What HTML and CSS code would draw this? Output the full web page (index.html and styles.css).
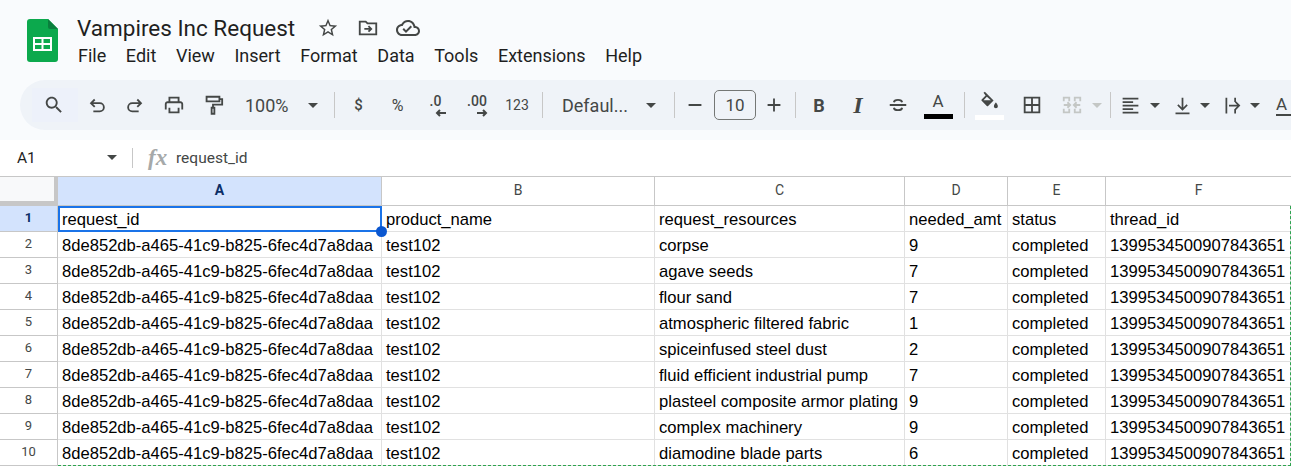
FILE: index.html
```html
<!DOCTYPE html>
<html lang="en">
<head>
  <meta charset="UTF-8">
  <meta name="viewport" content="width=device-width, initial-scale=1.0">
  <title>Vampires Inc Request</title>
  <link rel="stylesheet" href="styles.css">
</head>
<body>
  <div class="top">
    <header class="docbar">
      <svg class="logo" viewBox="0 0 31 43">
        <path d="M3 0H21L31 10V40a3 3 0 0 1-3 3H3a3 3 0 0 1-3-3V3a3 3 0 0 1 3-3z" fill="#0ca94d"/>
        <path d="M21 0L31 10H23a2 2 0 0 1-2-2z" fill="#0a7f3d"/>
        <path d="M6 18H25V32H6zM8 20V24H14.500V20zM16.500 20V24H23V20zM8 26V30H14.500V26zM16.500 26V30H23V26z" fill="#fff" fill-rule="evenodd"/>
      </svg>
      <div class="docinfo">
        <div class="titlerow">
          <span class="doctitle">Vampires Inc Request</span>
          <svg class="ticon star" viewBox="0 0 24 24"><path d="M22 9.240l-7.190-.62L12 2 9.190 8.630 2 9.240l5.460 4.730L5.820 21 12 17.270 18.180 21l-1.630-7.030L22 9.240zM12 15.400l-3.760 2.270 1-4.280-3.320-2.880 4.380-.38L12 6.100l1.710 4.040 4.380.38-3.320 2.880 1 4.280L12 15.400z"/></svg>
          <svg class="ticon move" viewBox="0 0 24 24"><path class="line" d="M3 19V5H9.500L11.500 7H21V19zM8 13H15M12.500 10L15.500 13L12.500 16"/></svg>
          <svg class="ticon cloud" viewBox="0 0 24 24"><path d="M19.350 10.040C18.670 6.590 15.640 4 12 4 9.110 4 6.600 5.640 5.350 8.040 2.340 8.360 0 10.910 0 14c0 3.310 2.690 6 6 6h13c2.760 0 5-2.240 5-5 0-2.640-2.050-4.780-4.650-4.960zM19 18H6c-2.210 0-4-1.790-4-4 0-2.050 1.530-3.760 3.560-3.970l1.070-.11.5-.95C8.080 7.140 9.940 6 12 6c2.620 0 4.880 1.860 5.390 4.430l.3 1.500 1.530.11c1.560.1 2.780 1.410 2.780 2.960 0 1.650-1.350 3-3 3zm-9-3.820l-2.090-2.090L6.500 13.500 10 17l6.010-6.010-1.410-1.410z"/></svg>
        </div>
        <nav class="menu">
          <span>File</span><span>Edit</span><span>View</span><span>Insert</span><span>Format</span><span>Data</span><span>Tools</span><span>Extensions</span><span>Help</span>
        </nav>
      </div>
    </header>

    <div class="toolbar">
      <div class="tool tool-search"><svg viewBox="0 0 24 24"><path d="M15.500 14h-.79l-.28-.27C15.410 12.590 16 11.110 16 9.500 16 5.910 13.090 3 9.500 3S3 5.910 3 9.500 5.910 16 9.500 16c1.610 0 3.090-.59 4.230-1.570l.27.28v.79l5 4.990L20.490 19l-4.990-5zm-6 0C7.010 14 5 11.990 5 9.500S7.010 5 9.500 5 14 7.010 14 9.500 11.990 14 9.500 14z"/></svg></div>
      <div class="tool w38"><svg viewBox="0 0 24 24"><path class="line" d="M9.500 6L5.500 10L9.500 14M5.500 10H15a4.500 4.500 0 0 1 0 9H8"/></svg></div>
      <div class="tool w38"><svg viewBox="0 0 24 24"><path class="line" d="M14.500 6L18.500 10L14.500 14M18.500 10H9a4.500 4.500 0 0 0 0 9H16"/></svg></div>
      <div class="tool w40"><svg viewBox="0 0 24 24"><path d="M19 8h-1V3H6v5H5c-1.660 0-3 1.340-3 3v6h4v4h12v-4h4v-6c0-1.660-1.340-3-3-3zM8 5h8v3H8V5zm8 14H8v-4h8v4zm2-2v-2H6v2H4v-6c0-.55.45-1 1-1h14c.55 0 1 .45 1 1v6h-2z"/></svg></div>
      <div class="tool w38"><svg viewBox="0 0 24 24"><path class="line" d="M5 3H19V8H5zM19 5.500H22V11.500H12V15M10.500 15H13.500V21.500H10.500z"/></svg></div>
      <div class="tool-zoom"><span>100%</span><i class="caret"></i></div>
      <i class="sep"></i>
      <div class="tool tool-text w47">$</div>
      <div class="tool tool-text tool-pct w31">%</div>
      <div class="tool w45 dec"><span>.0</span><svg viewBox="0 0 12 8"><path class="line" d="M11 4H2M5 1L2 4L5 7"/></svg></div>
      <div class="tool w38 dec"><span>.00</span><svg viewBox="0 0 12 8"><path class="line" d="M1 4H10M7 1L10 4L7 7"/></svg></div>
      <div class="tool tool-num w42">123</div>
      <i class="sep sep-num"></i>
      <div class="tool-font"><span>Defaul...</span><i class="caret"></i></div>
      <i class="sep"></i>
      <div class="tool w39"><svg viewBox="0 0 24 24"><path d="M5 11H19V13H5z"/></svg></div>
      <div class="sizebox">10</div>
      <div class="tool w35"><svg viewBox="0 0 24 24"><path d="M11 5H13V11H19V13H13V19H11V13H5V11H11z"/></svg></div>
      <i class="sep sep-size"></i>
      <div class="tool tool-bold w46">B</div>
      <div class="tool tool-italic w32">I</div>
      <div class="tool w48"><svg viewBox="0 0 24 24"><path class="line" d="M3 12H21M7.500 9C8 5.500 16 5.500 16.500 9M7.500 15C8 18.500 16 18.500 16.500 15"/></svg></div>
      <div class="tool tool-color w32"><span>A</span><i class="swatch swatch-black"></i></div>
      <i class="sep sep-color"></i>
      <div class="tool w48 fill">
        <svg viewBox="0 0 24 24"><path d="M6 2L7.500 .8 17 10.300 11 16.300a1 1 0 0 1-1.400 0L4 10.700a1 1 0 0 1 0-1.400L8.300 5zM9.700 6.400L6 10H14z"/><path d="M19.500 12.500s2.200 2.400 2.200 4a2.200 2.200 0 0 1-4.400 0c0-1.600 2.200-4 2.200-4z"/></svg>
        <i class="swatch swatch-white"></i>
      </div>
      <div class="tool w37"><svg viewBox="0 0 24 24"><path d="M3 3H21V21H3zM5 5V11H11V5zM13 5V11H19V5zM5 13V19H11V13zM13 13V19H19V13z" fill-rule="evenodd"/></svg></div>
      <div class="tool-merge">
        <svg viewBox="0 0 24 24"><path class="line" d="M9 8V4H3V8M3 16V20H9V16M15 8V4H21V8M21 16V20H15V16M3 12H10M7 9L10 12L7 15M21 12H14M17 9L14 12L17 15"/></svg>
        <i class="caret caret-off"></i>
      </div>
      <i class="sep"></i>
      <div class="tool-drop drop-align w52"><svg viewBox="0 0 24 24"><path d="M3 3H21V5H3zM3 7H15V9H3zM3 11H21V13H3zM3 15H15V17H3zM3 19H21V21H3z"/></svg><i class="caret"></i></div>
      <div class="tool-drop w50"><svg viewBox="0 0 24 24"><path d="M11 3H13V14.200L16.600 10.600 18 12 12 18 6 12 7.400 10.600 11 14.200zM4 20H20V22H4z"/></svg><i class="caret"></i></div>
      <div class="tool-drop w50"><svg viewBox="0 0 24 24"><path d="M4 3H6V21H4zM14 3H16V8H14zM14 16H16V21H14zM8 11H17.200L14.600 8.400 16 7 21 12 16 17 14.600 15.600 17.200 13H8z"/></svg><i class="caret"></i></div>
      <div class="tool-rotate">A</div>
    </div>
  </div>

  <div class="formula">
    <span class="namebox">A1</span>
    <i class="caret"></i>
    <i class="sep"></i>
    <span class="fx">fx</span>
    <span class="fvalue">request_id</span>
  </div>

  <div class="sheet">
    <table class="grid">
      <colgroup>
        <col class="c-row"><col class="c-a"><col class="c-b"><col class="c-c"><col class="c-d"><col class="c-e"><col class="c-f">
      </colgroup>
      <thead>
        <tr>
          <th class="corner"></th>
          <th class="active">A</th><th>B</th><th>C</th><th>D</th><th>E</th><th>F</th>
        </tr>
      </thead>
      <tbody>
        <tr><th class="active">1</th><td>request_id</td><td>product_name</td><td>request_resources</td><td>needed_amt</td><td>status</td><td>thread_id</td></tr>
        <tr><th>2</th><td>8de852db-a465-41c9-b825-6fec4d7a8daa</td><td>test102</td><td>corpse</td><td>9</td><td>completed</td><td>1399534500907843651</td></tr>
        <tr><th>3</th><td>8de852db-a465-41c9-b825-6fec4d7a8daa</td><td>test102</td><td>agave seeds</td><td>7</td><td>completed</td><td>1399534500907843651</td></tr>
        <tr><th>4</th><td>8de852db-a465-41c9-b825-6fec4d7a8daa</td><td>test102</td><td>flour sand</td><td>7</td><td>completed</td><td>1399534500907843651</td></tr>
        <tr><th>5</th><td>8de852db-a465-41c9-b825-6fec4d7a8daa</td><td>test102</td><td>atmospheric filtered fabric</td><td>1</td><td>completed</td><td>1399534500907843651</td></tr>
        <tr><th>6</th><td>8de852db-a465-41c9-b825-6fec4d7a8daa</td><td>test102</td><td>spiceinfused steel dust</td><td>2</td><td>completed</td><td>1399534500907843651</td></tr>
        <tr><th>7</th><td>8de852db-a465-41c9-b825-6fec4d7a8daa</td><td>test102</td><td>fluid efficient industrial pump</td><td>7</td><td>completed</td><td>1399534500907843651</td></tr>
        <tr><th>8</th><td>8de852db-a465-41c9-b825-6fec4d7a8daa</td><td>test102</td><td>plasteel composite armor plating</td><td>9</td><td>completed</td><td>1399534500907843651</td></tr>
        <tr><th>9</th><td>8de852db-a465-41c9-b825-6fec4d7a8daa</td><td>test102</td><td>complex machinery</td><td>9</td><td>completed</td><td>1399534500907843651</td></tr>
        <tr><th>10</th><td>8de852db-a465-41c9-b825-6fec4d7a8daa</td><td>test102</td><td>diamodine blade parts</td><td>6</td><td>completed</td><td>1399534500907843651</td></tr>
      </tbody>
    </table>
    <div class="copy-range"></div>
    <div class="selection"><i class="handle"></i></div>
  </div>
</body>
</html>
```

FILE: styles.css
```css
html, body {
  height: 467px;
  overflow: hidden;
}

body {
  margin: 0;
  background-color: #fff;
  font-family: Roboto, "Open Sans", sans-serif;
  color: #444746;
}

i {
  display: block;
}

svg {
  fill: #444746;
}

.line {
  fill: none;
  stroke: #444746;
  stroke-width: 2;
}

/* title and menu */
.top {
  height: 140px;
  background-color: #f9fbfd;
  overflow: hidden;
}

.docbar {
  display: flex;
  height: 80px;
}

.logo {
  width: 31px;
  height: 43px;
  margin: 19px 19px 0 27px;
}

.docinfo {
  display: flex;
  flex-direction: column;
}

.titlerow {
  display: flex;
  align-items: center;
  height: 28px;
  margin-top: 14px;
}

.doctitle {
  width: 240px;
  font-size: 22.5px;
  color: #1f1f1f;
  white-space: nowrap;
}

.ticon {
  width: 22px;
  height: 22px;
}

.star {
  margin-right: 18px;
}

.move {
  margin-right: 17px;
}

.cloud {
  width: 24px;
  height: 24px;
}

.menu {
  display: flex;
  gap: 19.6px;
  margin-top: 4px;
  margin-left: 1px;
  font-size: 18px;
  line-height: 20px;
  color: #1f1f1f;
}

/* toolbar */
.toolbar {
  display: flex;
  align-items: center;
  height: 50px;
  margin-left: 20px;
  padding-left: 12px;
  background-color: #eff3f8;
  border-radius: 25px 0 0 25px;
  overflow: hidden;
  white-space: nowrap;
}

.tool, .tool-drop, .tool-merge {
  display: flex;
  flex: none;
  align-items: center;
  justify-content: center;
}

.tool svg, .tool-drop svg, .tool-merge svg {
  width: 22px;
  height: 22px;
}

.tool-search {
  justify-content: flex-start;
  width: 46px;
  height: 34px;
  padding-left: 11px;
  box-sizing: border-box;
  background-color: #edf1fa;
}

.w31 { width: 31px; }
.w32 { width: 32px; }
.w35 { width: 35px; }
.w37 { width: 37px; }
.w38 { width: 38px; }
.w39 { width: 39px; }
.w40 { width: 40px; }
.w42 { width: 42px; }
.w45 { width: 45px; }
.w46 { width: 46px; }
.w47 { width: 47px; }
.w48 { width: 48px; }
.w50 { width: 50px; }
.w52 { width: 52px; }

.caret {
  flex: none;
  width: 0;
  height: 0;
  border-top: 5px solid #444746;
  border-left: 5px solid transparent;
  border-right: 5px solid transparent;
}

.caret-off {
  border-top-color: #c4c7c5;
}

.sep {
  flex: none;
  width: 1px;
  height: 26px;
  background-color: #c7c7c7;
}

.tool-zoom {
  display: flex;
  flex: none;
  align-items: center;
  width: 102px;
  padding-left: 13px;
  box-sizing: border-box;
  font-size: 18px;
}

.tool-zoom span {
  width: 63px;
}

.tool-text {
  font-size: 15px;
  font-weight: 500;
}

.tool-pct {
  font-size: 16px;
  font-weight: 400;
}

.tool-num {
  font-size: 14px;
}

.dec {
  flex-direction: column;
  height: 30px;
}

.dec span {
  font-size: 14px;
  font-weight: 500;
  line-height: 15px;
}

.dec svg {
  width: 12px;
  height: 8px;
  margin-left: 10px;
}

.sep-num {
  margin-left: 4px;
}

.tool-font {
  display: flex;
  flex: none;
  align-items: center;
  width: 131px;
  padding-left: 19px;
  box-sizing: border-box;
  font-size: 18px;
}

.tool-font span {
  width: 84px;
}

.sizebox {
  flex: none;
  width: 42px;
  height: 30px;
  box-sizing: border-box;
  border: 1px solid #747775;
  border-radius: 5px;
  font-size: 17px;
  line-height: 28px;
  text-align: center;
}

.sep-size {
  margin-left: 4px;
}

.tool-bold {
  font-size: 18px;
  font-weight: 700;
}

.tool-italic {
  font-family: "Liberation Serif", serif;
  font-size: 24px;
  font-style: italic;
  font-weight: 700;
}

.tool-color {
  flex-direction: column;
  font-size: 17px;
}

.tool-color span {
  line-height: 20px;
}

.swatch {
  flex: none;
  width: 29px;
  height: 5px;
  margin-top: 3px;
}

.swatch-black {
  background-color: #000;
}

.swatch-white {
  background-color: #fff;
}

.sep-color {
  margin-left: 10px;
}

.fill {
  flex-direction: column;
  height: 36px;
}

.fill .swatch {
  margin-top: 2px;
}

.tool-merge {
  justify-content: flex-start;
  width: 60px;
  gap: 9px;
  padding-left: 11px;
  box-sizing: border-box;
}

.tool-merge svg {
  fill: none;
}

.tool-merge .line {
  stroke: #c4c7c5;
}

.tool-drop {
  gap: 7px;
  justify-content: flex-start;
  padding-left: 9px;
  box-sizing: border-box;
}

.drop-align {
  gap: 9px;
}

.tool-drop svg {
  width: 21px;
  height: 21px;
}

.tool-rotate {
  flex: none;
  margin-left: 13px;
  padding-right: 4px;
  border-bottom: 2px solid #444746;
  font-size: 17px;
  line-height: 19px;
}

/* formula bar */
.formula {
  display: flex;
  align-items: center;
  height: 36px;
  padding-bottom: 1px;
  box-sizing: border-box;
  font-size: 15.5px;
  color: #1f1f1f;
}

.namebox {
  width: 90px;
  padding-left: 17px;
}

.formula .sep {
  height: 20px;
  margin-left: 15px;
}

.fx {
  width: 28px;
  margin-left: 15px;
  font-family: "Liberation Serif", serif;
  font-size: 23px;
  font-style: italic;
  font-weight: 700;
  color: #a6a9a9;
}

.fvalue {
  color: #444746;
}

/* sheet */
.sheet {
  position: relative;
}

.grid {
  width: 1291px;
  table-layout: fixed;
  border-collapse: separate;
  border-spacing: 0;
  font-family: "Liberation Sans", Arial, sans-serif;
  font-size: 16.6px;
  color: #000;
}

.c-row { width: 58px; }
.c-a { width: 324px; }
.c-b { width: 273px; }
.c-c { width: 250px; }
.c-d { width: 103px; }
.c-e { width: 98px; }

.grid th {
  box-sizing: border-box;
  padding: 0 0 2px;
  border-right: 1px solid #c7c7c7;
  border-bottom: 1px solid #c7c7c7;
  background-color: #fff;
  font-family: Roboto, sans-serif;
  font-size: 13px;
  font-weight: 400;
  color: #444746;
  text-align: center;
}

.grid thead th {
  height: 30px;
  border-top: 1px solid #c7c7c7;
  font-size: 14px;
}

.grid th:last-child {
  border-right: none;
}

.grid .corner {
  border-right: 4px solid #c7c7c7;
  border-bottom: 5px solid #c7c7c7;
  background-color: #f8f9fa;
}

.grid .active {
  background-color: #d3e3fd;
  font-weight: 700;
  color: #0b2e66;
}

.grid td {
  box-sizing: border-box;
  height: 26px;
  padding: 2px 3px 0 4px;
  border-right: 1px solid #e1e1e1;
  border-bottom: 1px solid #e1e1e1;
  overflow: hidden;
  white-space: nowrap;
}

.grid tbody th {
  height: 26px;
}

.selection {
  position: absolute;
  top: 30px;
  left: 58px;
  width: 324px;
  height: 26px;
  box-sizing: border-box;
  border: 2px solid #1a73e8;
}

.handle {
  position: absolute;
  right: -7px;
  bottom: -7px;
  width: 11px;
  height: 11px;
  border-radius: 50%;
  background-color: #0b57d0;
}

.copy-range {
  position: absolute;
  top: 30px;
  left: 58px;
  right: 0;
  height: 260px;
  box-sizing: border-box;
  border-right: 1px dashed #2ea44f;
  border-bottom: 1px dashed #2ea44f;
}
```
